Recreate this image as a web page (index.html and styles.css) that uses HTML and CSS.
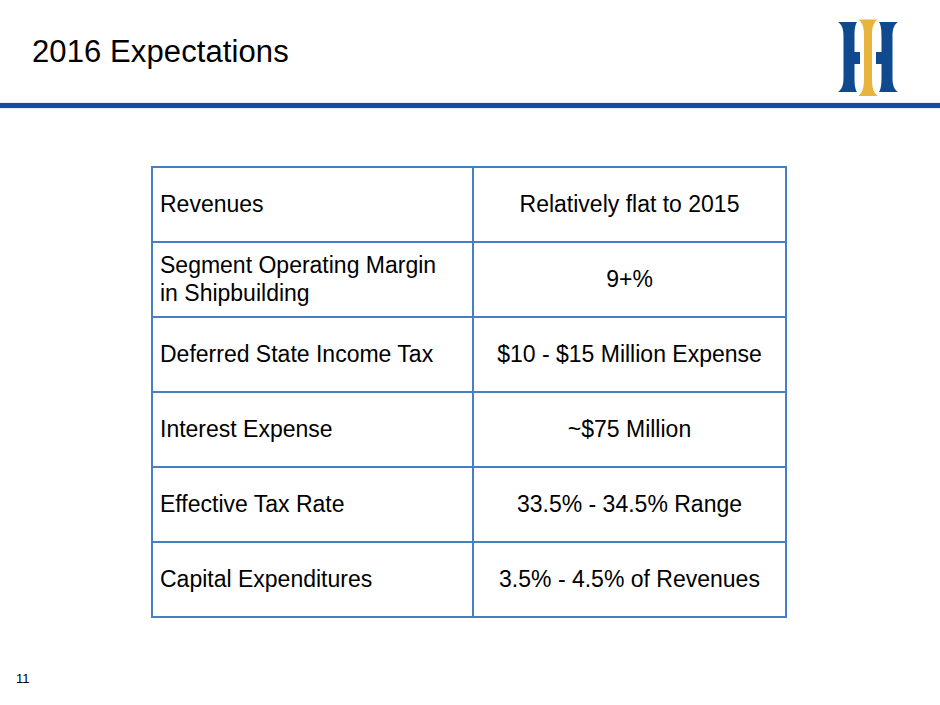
FILE: index.html
```html
<!DOCTYPE html>
<html lang="en">
<head>
<meta charset="utf-8">
<title>2016 Expectations</title>
<link rel="stylesheet" href="styles.css">
</head>
<body>
<div class="slide">
  <header class="header">
    <h1 class="title">2016 Expectations</h1>
    <svg class="logo" width="66" height="80" viewBox="0 0 66 80" aria-label="HII logo">
      <path fill="#0f4a8e" d="M2,4 H21 C18.5,8 18.5,14 18.5,20 V58 C18.5,64 18.5,70 21,74 H2 C7.5,70 7.5,64 7.5,58 V20 C7.5,14 7.5,8 2,4 Z"/>
      <rect fill="#0f4a8e" x="16" y="34" width="8" height="12"/>
      <path fill="#0f4a8e" d="M43,4 H62 C56.5,8 56.5,14 56.5,20 V58 C56.5,64 56.5,70 62,74 H43 C45.5,70 45.5,64 45.5,58 V20 C45.5,14 45.5,8 43,4 Z"/>
      <rect fill="#0f4a8e" x="40" y="34" width="7" height="12"/>
      <path fill="#e8b43e" d="M22.5,1.5 H41.5 C36,6 36,12 36,20 V58 C36,66 36,73 41.5,78 H22.5 C28,73 28,66 28,58 V20 C28,12 28,6 22.5,1.5 Z"/>
    </svg>
  </header>
  <div class="rule"></div>
  <div class="grid">
    <div class="cell label">Revenues</div>
    <div class="cell value">Relatively flat to 2015</div>
    <div class="cell label">Segment Operating Margin<br>in Shipbuilding</div>
    <div class="cell value">9+%</div>
    <div class="cell label">Deferred State Income Tax</div>
    <div class="cell value">$10 - $15 Million Expense</div>
    <div class="cell label">Interest Expense</div>
    <div class="cell value">~$75 Million</div>
    <div class="cell label">Effective Tax Rate</div>
    <div class="cell value">33.5% - 34.5% Range</div>
    <div class="cell label">Capital Expenditures</div>
    <div class="cell value">3.5% - 4.5% of Revenues</div>
  </div>
  <div class="page-num">11</div>
</div>
</body>
</html>
```

FILE: styles.css
```css
html, body {
  margin: 0;
  padding: 0;
  background: #ffffff;
}

body {
  font-family: "Liberation Sans", Arial, Helvetica, sans-serif;
  color: #000000;
}

.slide {
  width: 940px;
  height: 705px;
  overflow: hidden;
  position: relative;
  background: #ffffff;
}

.header {
  height: 103px;
  display: flex;
  align-items: flex-start;
  padding-left: 32px;
  padding-right: 38px;
  box-sizing: border-box;
}

.title {
  margin: 34px 0 0 0;
  font-size: 31px;
  font-weight: normal;
  line-height: 1.15;
  letter-spacing: 0.1px;
}

.logo {
  display: block;
  margin-left: auto;
  margin-top: 18px;
}

.rule {
  height: 5px;
  background: #1a4aa2;
  box-shadow: 0 0 1px #6f93cf;
}

.grid {
  margin: 58px 0 0 151px;
  width: 636px;
  box-sizing: border-box;
  display: grid;
  grid-template-columns: 319px 311px;
  grid-auto-rows: 73px;
  gap: 2px;
  padding: 2px;
  background: #4580c6;
}

.cell {
  background: #ffffff;
  display: flex;
  align-items: center;
  font-size: 23px;
  line-height: 1.2;
}

.label {
  padding-left: 7px;
}

.value {
  justify-content: center;
  text-align: center;
}

.page-num {
  margin-top: 54px;
  padding-left: 16px;
  font-size: 13px;
  line-height: 1.15;
}
```
